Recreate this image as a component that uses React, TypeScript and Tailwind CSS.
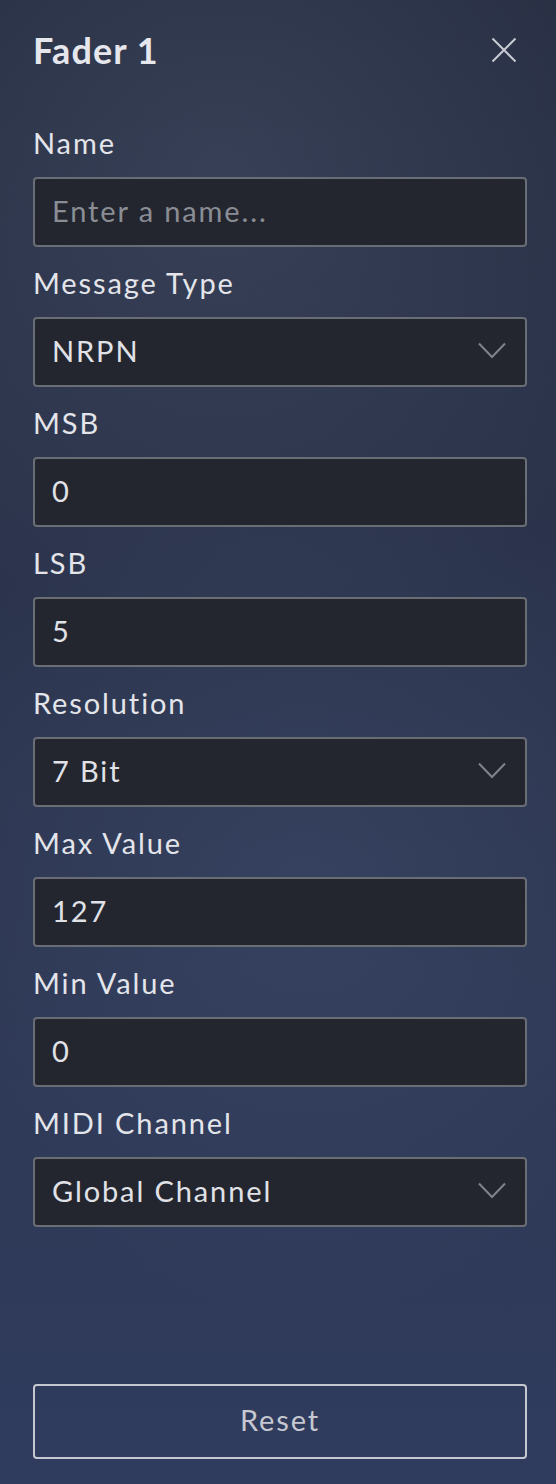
import React from "react";

const fields: { label: string; value?: string; placeholder?: string; select?: boolean }[] = [
  { label: "Name", placeholder: "Enter a name..." },
  { label: "Message Type", value: "NRPN", select: true },
  { label: "MSB", value: "0" },
  { label: "LSB", value: "5" },
  { label: "Resolution", value: "7 Bit", select: true },
  { label: "Max Value", value: "127" },
  { label: "Min Value", value: "0" },
  { label: "MIDI Channel", value: "Global Channel", select: true },
];

function Chevron() {
  return (
    <svg width="28" height="17" viewBox="0 0 28 17" fill="none" className="mr-[19px]">
      <path d="M1 1.5 L14 15 L27 1.5" stroke="#80838b" strokeWidth="2" />
    </svg>
  );
}

export default function App() {
  return (
    <div
      className="min-h-[1484px] w-full flex flex-col pl-[33px] pr-[29px] text-[#e3e5ea] bg-[radial-gradient(circle_at_40%_12%,rgba(74,84,108,0.45),transparent_35%),radial-gradient(circle_at_55%_60%,rgba(70,85,120,0.35),transparent_45%),linear-gradient(180deg,#262d41_0%,#2c354e_45%,#303c5e_100%)]"
      style={{ fontFamily: "Lato, 'Noto Sans', sans-serif" }}
    >
      {/* Header */}
      <header className="h-[100px] flex items-center justify-between">
        <h1 className="text-[36px] font-bold leading-none tracking-[0.03em] text-[#e6e7ec]">Fader 1</h1>
        <button className="mr-[10px]">
          <svg width="26" height="26" viewBox="0 0 26 26" fill="none">
            <path d="M1.5 1.5 L24.5 24.5 M24.5 1.5 L1.5 24.5" stroke="#c7cad2" strokeWidth="2" />
          </svg>
        </button>
      </header>

      {/* Fields */}
      <main className="mt-[26px] flex flex-col gap-[19px]">
        {fields.map((f) => (
          <div key={f.label} className="flex flex-col">
            <label className="h-[36px] leading-[34px] text-[29px] tracking-[0.065em] mb-[15px]">{f.label}</label>
            <div className="h-[70px] rounded-[4px] border-2 border-[#6a6d74] bg-[#23262f] flex items-center justify-between pl-[17px] pb-[3px]">
              {f.placeholder ? (
                <span className="text-[29px] tracking-[0.065em] text-[#8a8d94]">{f.placeholder}</span>
              ) : (
                <span className="text-[29px] tracking-[0.065em] text-[#e0e2e7]">{f.value}</span>
              )}
              {f.select && <Chevron />}
            </div>
          </div>
        ))}
      </main>

      <div className="flex-1" />

      {/* Footer */}
      <button className="h-[75px] mb-[25px] pb-[4px] rounded-[4px] border-2 border-[#c5c8d0] text-[29px] tracking-[0.065em] text-[#c5c8d0]">
        Reset
      </button>
    </div>
  );
}
